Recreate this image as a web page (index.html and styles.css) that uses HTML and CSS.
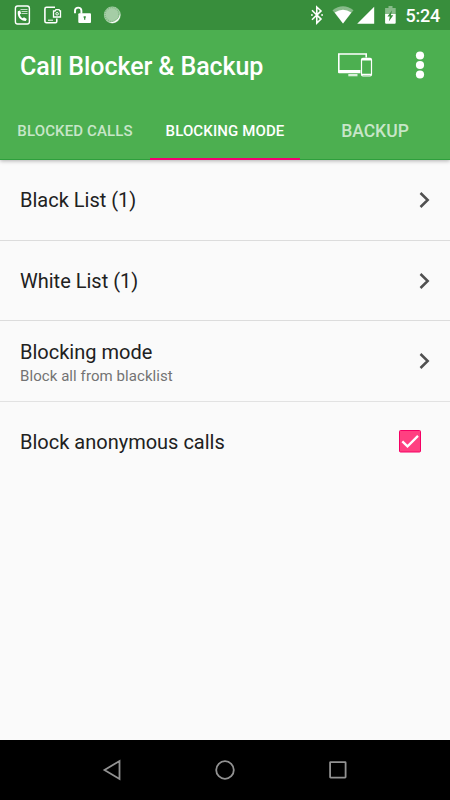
FILE: index.html
```html
<!DOCTYPE html>
<html lang="en">
<head>
<meta charset="utf-8">
<title>Call Blocker &amp; Backup</title>
<link rel="stylesheet" href="styles.css">
</head>
<body>
<div class="screen">
  <header class="top">
    <div class="status">
      <svg class="notices" width="130" height="30" viewBox="0 0 130 30" fill="none" stroke="#fff">
        <rect x="15.4" y="6" width="14" height="18" rx="2.2" stroke-width="1.4"/>
        <path d="M17.8 11.2c-.8 5.4 2.8 9.8 8 9.8l1-2-2.8-1.8-1.4 1c-1.6-.8-2.5-2.1-2.7-3.6l1.2-1.1-.9-3z" fill="#fff" stroke="none"/>
        <path d="M20.5 9.5h7M21.5 11.5h6M21.5 13.5h6" stroke-opacity=".7"/>
        <path d="M55 7.3h-8.5q-1.6 0-1.6 1.6v12.3q0 1.6 1.6 1.6h9q1.3 0 1.3-1.6V18.5" stroke-width="1.6"/>
        <path d="M48 20.2h5"/>
        <path d="M53.5 11h1.5l1-1.4h3l1 1.4h.5v6h-7z" stroke-width="1.3"/>
        <circle cx="57.1" cy="13.8" r="1.3"/>
        <path d="M75 13.3v-2.5a3.2 3.2 0 0 1 6.4 0v3" stroke-width="1.9"/>
        <rect x="78.3" y="13.2" width="12.7" height="9.8" rx="1" fill="#fff" stroke="none"/>
        <path d="M84.7 16.2v3.5M83.6 17h2.2" stroke="#388e3c" stroke-width="1.3"/>
        <circle cx="112.3" cy="15" r="8.4" fill="#a5cda6" stroke="none"/>
        <circle cx="112" cy="14.5" r="6.9" stroke="#7db67f" stroke-width="1.3" stroke-dasharray="1 1"/>
        <path d="M120 13a8 8 0 0 1-11 9.2 9.5 9.5 0 0 0 11-9.2z" fill="#fff" stroke="none"/>
      </svg>
      <svg class="system" width="95" height="30" viewBox="306 0 95 30" fill="none">
        <path d="M312 10.3l9 8.8-4.2 4V7l4.2 3.9-9 8.8" stroke="#fff" stroke-width="1.6"/>
        <path d="M311 15h1.8M321.2 15h1.8" stroke="#fff" stroke-width="1.6"/>
        <path d="M332.5 10.2q10.5-8 21 0L343 23.5z" fill="#88bb8a"/>
        <path d="M334.7 12.6q8.3-5.5 16.6 0L343 23.5z" fill="#fff"/>
        <path d="M374.2 6.8v17h-17z" fill="#fff"/>
        <path d="M388.5 6h4v2h3.2v6.5h-10.6V8h3.4z" fill="#88bb8a"/>
        <path d="M385.1 14h10.6v8.8q0 1-1 1h-8.6q-1 0-1-1z" fill="#fff"/>
        <path d="M392 10.5l-4.6 6h2.4l-1 5 4.5-6.3h-2.4z" fill="#388e3c"/>
      </svg>
      <span class="clock">5:24</span>
    </div>
    <div class="toolbar">
      <h1>Call Blocker &amp; Backup</h1>
      <svg class="devices" width="36" height="26" viewBox="337 52 36 26" fill="none" stroke="#fff">
        <path d="M360.5 73.3H339q-1 0-1-1V53.2h29v4.3h-1.6v-2.7h-25.8v15.3h20.9z" fill="#fff" stroke="none"/>
        <path d="M348.3 74h9.2v2.3h-9.2z" fill="#fff" fill-opacity=".8" stroke="none"/>
        <rect x="361.5" y="58.4" width="10" height="17.6" rx="1.4" stroke-width="1.2"/>
        <path d="M362 59.7h9M362 74.5h9" stroke-width="1.4"/>
      </svg>
      <svg class="more" width="10" height="28" viewBox="0 0 10 28" fill="#fff"><circle cx="5" cy="4.5" r="4.1"/><circle cx="5" cy="14" r="4.1"/><circle cx="5" cy="23.5" r="4.1"/></svg>
    </div>
    <nav class="tabs">
      <div class="tab">BLOCKED CALLS</div>
      <div class="tab active">BLOCKING MODE</div>
      <div class="tab large">BACKUP</div>
    </nav>
  </header>
  <main class="list">
    <div class="row first">
      <div class="label">Black List (1)</div>
      <svg class="chevron" width="12" height="18" viewBox="0 0 12 18"><path d="M1.5 2l7.2 7-7.2 7"/></svg>
    </div>
    <div class="row">
      <div class="label">White List (1)</div>
      <svg class="chevron" width="12" height="18" viewBox="0 0 12 18"><path d="M1.5 2l7.2 7-7.2 7"/></svg>
    </div>
    <div class="row tall">
      <div class="mode">
        <div class="label">Blocking mode</div>
        <div class="detail">Block all from blacklist</div>
      </div>
      <svg class="chevron" width="12" height="18" viewBox="0 0 12 18"><path d="M1.5 2l7.2 7-7.2 7"/></svg>
    </div>
    <div class="row last">
      <div class="label">Block anonymous calls</div>
      <svg class="check" width="22" height="23" viewBox="0 0 22 23"><rect x=".5" y=".5" width="21" height="21.5" rx="1" fill="#ff4081" stroke="#f50064"/><path d="M3.3 11.3l5.2 5L19 5.9" fill="none" stroke="#fff" stroke-width="2.3"/></svg>
    </div>
  </main>
  <footer class="navbar">
    <svg width="20" height="22" viewBox="0 0 20 22"><path d="M17.5 2v18L2.5 11z"/></svg>
    <svg width="22" height="22" viewBox="0 0 22 22"><circle cx="11" cy="11" r="8.8"/></svg>
    <svg width="20" height="20" viewBox="0 0 20 20"><rect x="2.1" y="2.1" width="15.5" height="15.5" rx=".5"/></svg>
  </footer>
</div>
</body>
</html>
```
FILE: styles.css
```css
* { box-sizing: border-box; }
body { margin: 0; font-family: Roboto, sans-serif; background: #fafafa; }
svg { display: block; flex: none; }
.screen { width: 450px; height: 800px; display: flex; flex-direction: column; background: #fafafa; overflow: hidden; }
.top { height: 160px; flex: none; background: #4caf50; color: #fff; box-shadow: 0 1px 4px rgba(0, 0, 0, .3); }
.status { height: 30px; display: flex; align-items: center; background: #388e3c; }
.system { margin-left: 176px; }
.clock { margin-left: 4.5px; padding-top: 2px; font-size: 18px; line-height: 28px; font-weight: 500; letter-spacing: -.2px; }
.toolbar { height: 70px; display: flex; align-items: center; padding: 0 25px 0 20px; }
h1 { margin: 4px 0 0; font-size: 25px; line-height: 30px; font-weight: 500; letter-spacing: -.08px; white-space: nowrap; }
.devices { margin-left: auto; }
.more { margin-left: 42px; }
.tabs { height: 60px; display: grid; grid-template-columns: repeat(3, 150px); border-bottom: 1px solid #2e9f3c; }
.tab { height: 60px; padding-top: 21px; font-size: 15px; line-height: 20px; font-weight: 500; letter-spacing: .12px; text-align: center; color: rgba(255, 255, 255, .7); white-space: nowrap; }
.tab.active { color: #fff; border-bottom: 2px solid #f50072; }
.tab.large { font-size: 17.5px; letter-spacing: 0; }
.list { flex: 1; }
.row { height: 80px; display: flex; align-items: center; justify-content: space-between; padding: 0 19px 0 20px; border-bottom: 1px solid #dcdcdc; }
.row.first { height: 81px; }
.row.tall { height: 81px; border-bottom-color: #e2e2e2; }
.row.last { border: 0; padding-right: 29px; }
.label { font-size: 20px; line-height: 24px; color: #212121; white-space: nowrap; }
.mode { padding-top: 3px; }
.detail { margin-top: 2px; font-size: 15px; line-height: 20px; letter-spacing: .07px; color: #737373; white-space: nowrap; }
.chevron { fill: none; stroke: #505050; stroke-width: 2.5; }
.check { margin-bottom: 2px; }
.navbar { height: 60px; flex: none; display: flex; align-items: center; justify-content: space-between; padding: 0 102px 0 102px; background: #000; }
.navbar svg { fill: none; stroke: #929292; stroke-width: 1.8; }
```
